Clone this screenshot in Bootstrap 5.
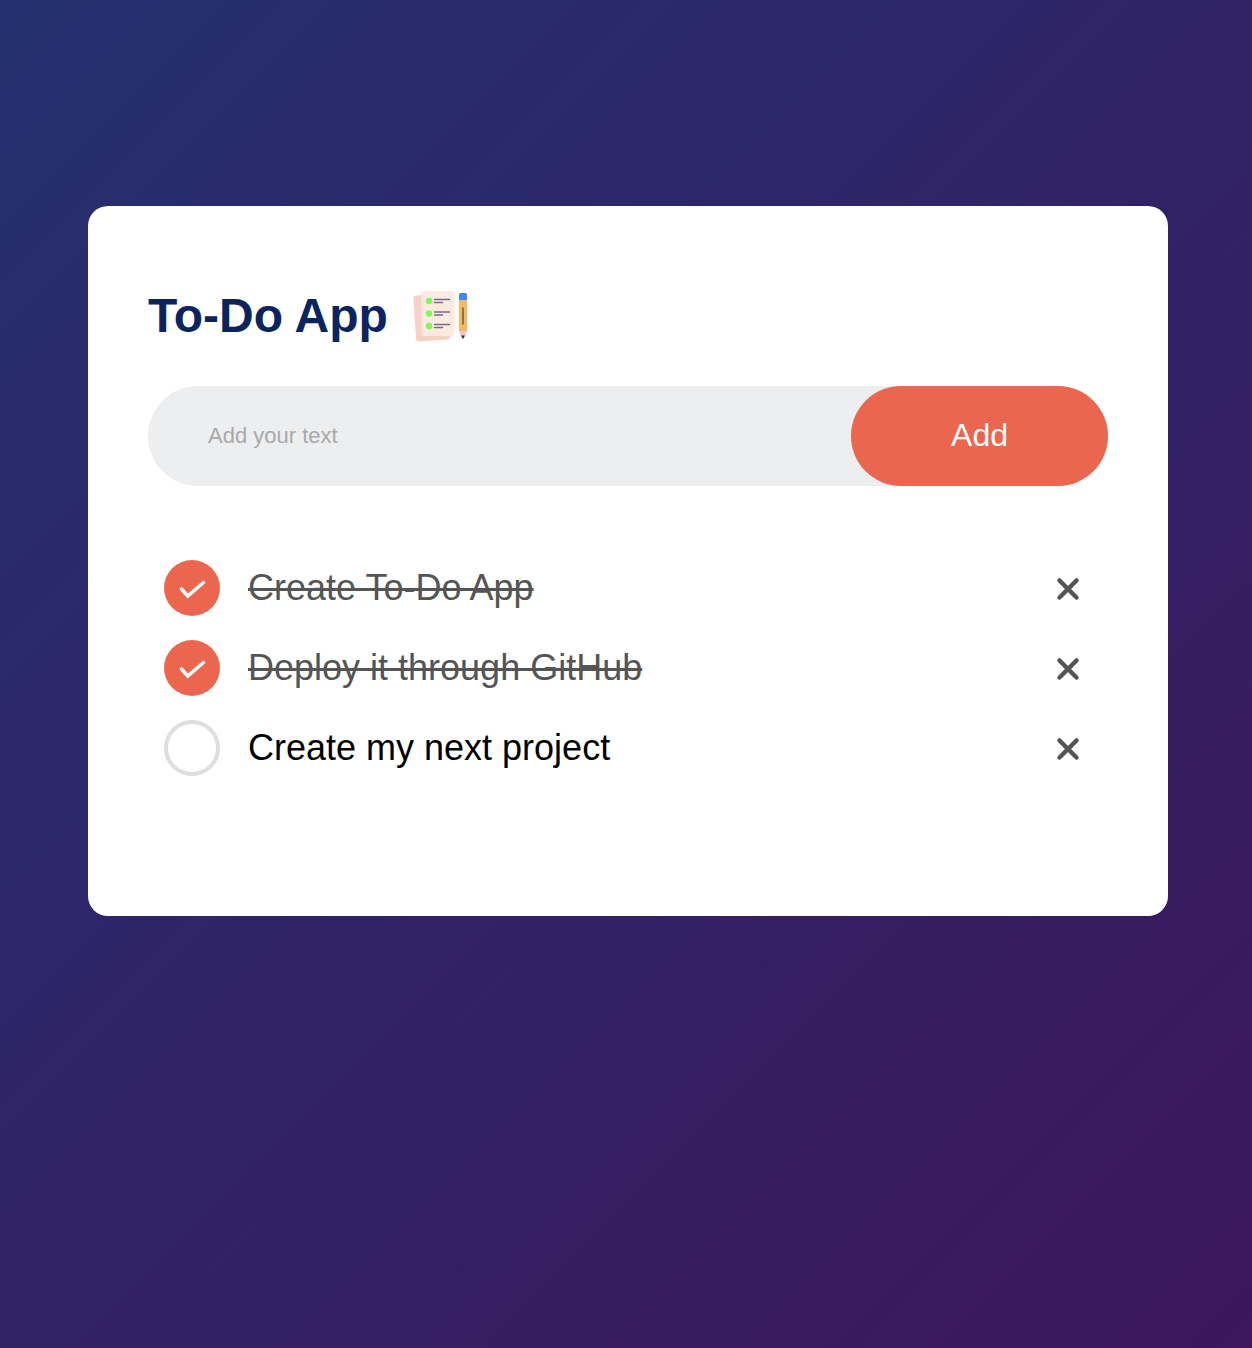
<!DOCTYPE html>
<html lang="en">
<head>
<meta charset="utf-8">
<meta name="viewport" content="width=device-width, initial-scale=1">
<title>To-Do App</title>
<link rel="stylesheet" href="https://cdn.jsdelivr.net/npm/bootstrap@5.3.0/dist/css/bootstrap.min.css">
<style>
  body { font-family: "Liberation Sans", Arial, sans-serif; }
  .page { background: linear-gradient(135deg, #24306f, #3d165d); padding: 206px 84px 80px 88px; }
  .todo-card { max-width: 1080px; border-radius: 20px; padding: 80px 60px 128px; }
  .todo-title { font-size: 48px; line-height: 60px; color: #0b2460; }
  .title-icon { width: 60px; height: 60px; }
  .entry { background: #edeef0; border-radius: 50px; height: 100px; margin-top: 40px; }
  .entry input { padding: 0 20px 2px 60px; font-size: 22px; color: #000; }
  .entry input::placeholder { color: #a9a9a9; opacity: 1; }
  .entry input:focus { outline: 0; }
  .add-btn { background: #ec664f; font-size: 32px; border-radius: 50px; padding: 0 100px 2px; line-height: 98px; }
  .tasks { margin-top: 62px; }
  .task { height: 80px; padding: 0 16px; }
  .task label { font-size: 36px; line-height: 56px; color: #000; padding-left: 28px; }
  .task input { appearance: none; width: 56px; height: 56px; border: 4px solid #dedede; border-radius: 50%; }
  .task input:checked {
    border: 0;
    background: #ec664f url("data:image/svg+xml,%3Csvg xmlns='http://www.w3.org/2000/svg' viewBox='0 0 56 56'%3E%3Cpath d='M17.5 29l6.300 7L39.500 22.500' fill='none' stroke='%23fff' stroke-width='3.500' stroke-linecap='round'/%3E%3C/svg%3E") center / 56px;
  }
  .task input:checked + label { color: #555; text-decoration: line-through; text-decoration-thickness: 3px; text-decoration-skip-ink: none; }
  .remove-btn { width: 48px; height: 48px; }
</style>
<script defer src="https://cdn.jsdelivr.net/npm/bootstrap@5.3.0/dist/js/bootstrap.bundle.min.js"></script>
</head>
<body>
<div class="page min-vh-100">
  <main class="todo-card bg-white mx-auto">
    <h1 class="todo-title d-flex align-items-center fw-bold mb-0">
      To-Do App
      <svg class="title-icon ms-4" viewBox="0 -4 60 60" aria-hidden="true">
        <path d="M4 5.500l31-2 3 43q0 3-3 3l-28 2q-3 0-3-3L1.500 8q0-2.500 2.500-2.500z" fill="#f8d1c5"/>
        <rect x="9.500" y="1" width="33" height="45" rx="3" fill="#fbeadf"/>
        <g fill="#7dfb57"><circle cx="17" cy="11" r="3.200"/><circle cx="17" cy="23.500" r="3.200"/><circle cx="17" cy="36" r="3.200"/></g>
        <path d="M22.500 9.500h15M22.500 12.500h8M22.500 22h15M22.500 25h8M22.500 34.500h15M22.500 37.500h8" stroke="#7c6791" stroke-width="1.500" stroke-linecap="round"/>
        <path d="M47 10h8v31h-8z" fill="#f5ba60"/>
        <path d="M47 10V4.500q0-1.500 1.500-1.500h5q1.500 0 1.500 1.500V10z" fill="#3b88f5"/>
        <path d="M51 17.500v17" stroke="#796042" stroke-width="1.600"/>
        <path d="M47 41h8l-2 5h-4z" fill="#fbc0ca"/>
        <path d="M49 45.500h4l-1.500 3h-1z" fill="#333"/>
      </svg>
    </h1>
    <form class="entry d-flex">
      <input type="text" class="flex-grow-1 border-0 bg-transparent" placeholder="Add your text" aria-label="Add your text">
      <button type="button" class="add-btn border-0 text-white">Add</button>
    </form>
    <ul class="tasks list-unstyled mb-0">
      <li class="task d-flex align-items-center">
        <input type="checkbox" id="t1" class="flex-shrink-0" checked><label for="t1">Create To-Do App</label>
        <button type="button" class="remove-btn ms-auto border-0 bg-transparent p-0" aria-label="Remove"><svg width="48" height="48" class="d-block"><path d="M15.500 16.500l17 17m0-17l-17 17" stroke="#555" stroke-width="4.500" stroke-linecap="round"/></svg></button>
      </li>
      <li class="task d-flex align-items-center">
        <input type="checkbox" id="t2" class="flex-shrink-0" checked><label for="t2">Deploy it through GitHub</label>
        <button type="button" class="remove-btn ms-auto border-0 bg-transparent p-0" aria-label="Remove"><svg width="48" height="48" class="d-block"><path d="M15.500 16.500l17 17m0-17l-17 17" stroke="#555" stroke-width="4.500" stroke-linecap="round"/></svg></button>
      </li>
      <li class="task d-flex align-items-center">
        <input type="checkbox" id="t3" class="flex-shrink-0"><label for="t3">Create my next project</label>
        <button type="button" class="remove-btn ms-auto border-0 bg-transparent p-0" aria-label="Remove"><svg width="48" height="48" class="d-block"><path d="M15.500 16.500l17 17m0-17l-17 17" stroke="#555" stroke-width="4.500" stroke-linecap="round"/></svg></button>
      </li>
    </ul>
  </main>
</div>
</body>
</html>
